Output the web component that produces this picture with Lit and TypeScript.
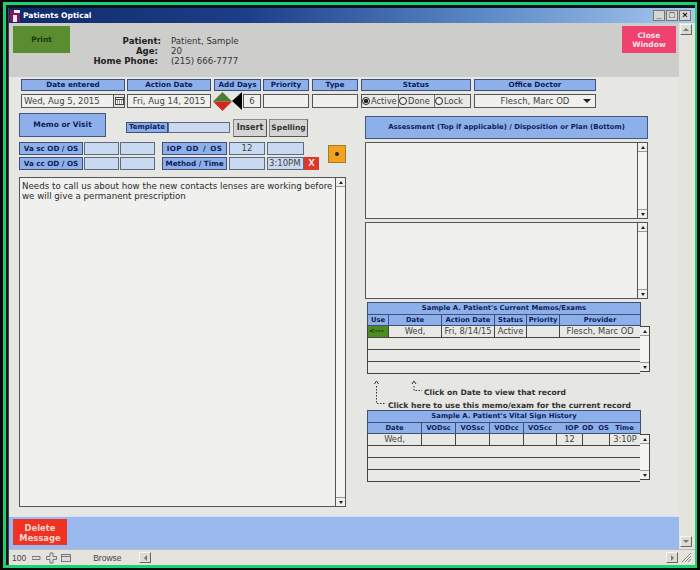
import { LitElement, html, css } from "lit";
import { customElement } from "lit/decorators.js";

const scrollbar = () => html`<div class="sb"><span class="sbb"><i class="up"></i></span><span class="sbt"></span><span class="sbb"><i class="dn"></i></span></div>`;
const radio = (label: string, on = false) => html`<span class="rd"><i class="rc ${on ? "on" : ""}"></i>${label}</span>`;

@customElement("app-root")
export class AppRoot extends LitElement {
  static styles = css`
    :host { display: block; width: 700px; height: 570px; background: #05080c; font-family: "DejaVu Sans", Verdana, sans-serif; overflow: hidden; }
    * { box-sizing: border-box; }
    .outer { width: 700px; height: 570px; padding: 2px 3px 2px 3px; }
    .green { width: 100%; height: 100%; border: solid #1fd071; border-width: 3px 2px 3px 3px; padding: 3px 0 0 2px; background: #0c1424; }
    .win { height: 100%; display: flex; flex-direction: column; background: #e6e6e3; border-left: 1px solid #444; }
    .title { height: 15px; flex: none; display: flex; align-items: center; padding-left: 1px; color: #fff; font: bold 7.6px "DejaVu Sans", sans-serif; background: linear-gradient(90deg, #0f2a6a 0%, #1d3f88 35%, #5d8bc8 70%, #a8c8ee 100%); }
    .title svg { margin-right: 3px; }
    .wbtns { margin-left: auto; display: flex; padding-right: 4px; }
    .wb { width: 12px; height: 11px; background: #d6d6d2; border: 1px solid #77776f; display: flex; align-items: center; justify-content: center; margin-left: 1px; color: #111; font: bold 9px "Liberation Sans", sans-serif; line-height: 9px; }
    .main { flex: 1; display: flex; min-height: 0; }
    .content { width: 670px; display: flex; flex-direction: column; }
    .vs { flex: 1; background: #e4e3de; display: flex; flex-direction: column; justify-content: space-between; align-items: center; padding: 1px 3px 2px 0; }
    .pb { width: 12px; height: 11px; background: #dcdcd6; border: 1px solid; border-color: #f4f4f0 #66665f #66665f #f4f4f0; display: flex; align-items: center; justify-content: center; flex: none; }
    .pb i { display: block; width: 0; height: 0; border: 3px solid transparent; }
    .pb i.up { border-bottom-color: #777; border-top-width: 0; }
    .pb i.dn { border-top-color: #777; border-bottom-width: 0; }
    .pb i.lf { border-right-color: #777; border-left-width: 0; }
    .pb i.rt { border-left-color: #777; border-right-width: 0; }
    .head { height: 54px; flex: none; background: #cdcdcb; display: flex; padding: 3px 3px 0 4px; }
    .btn { display: flex; align-items: center; justify-content: center; text-align: center; font: bold 7.5px/9.5px "DejaVu Sans", sans-serif; width: 57px; height: 27px; }
    .print { background: #5a8c30; color: #173a10; }
    .close { background: #f0426f; color: #fbe3e8; width: 54px; margin-left: auto; padding-top: 1px; }
    .pat { margin: 10px 0 0 0; align-self: flex-start; display: grid; grid-template-columns: 91px 82px; column-gap: 10px; font-size: 8.6px; line-height: 10px; color: #333; white-space: nowrap; }
    .pat b { text-align: right; color: #222; font-size: 8.6px; }
    .pat b.in { padding-right: 3px; }
    .lab { background: #8db0ea; border: 1px solid #3e4f78; color: #101d58; font: bold 7.2px/1 "DejaVu Sans", sans-serif; display: flex; align-items: center; justify-content: center; white-space: nowrap; }
    .fld { background: #f0f0ee; border: 1px solid #555; color: #444; font: 8.5px/1 "DejaVu Sans", sans-serif; display: flex; align-items: center; justify-content: center; white-space: nowrap; overflow: hidden; }
    .lb { background: #c9d9f2; border-color: #5f6a7c; }
    .r1 { display: flex; margin: 2px 0 0 12px; height: 12px; }
    .r2 { display: flex; margin: 3px 0 0 12px; height: 14px; align-items: center; }
    .w105 { width: 104px; margin-right: 2px; } .w84 { width: 84px; margin-right: 3px; } .w47 { width: 47px; margin-right: 2px; }
    .w46 { width: 46px; margin-right: 3px; } .w110 { width: 110px; margin-right: 3px; } .w122 { width: 122px; }
    .date { width: 104px; margin-right: 2px; height: 14px; display: flex; }
    .date .fld { flex: 1; border-right: 0; justify-content: flex-start; padding-left: 2px; }
    .cal { width: 12px; border: 1px solid #555; background: #e4e4e2; display: flex; align-items: center; justify-content: center; }
    .f14 { height: 14px; }
    .dia { width: 19px; height: 19px; margin: 0 0 0 -1px; flex: none; }
    .tri { width: 11px; height: 18px; flex: none; }
    .add { width: 18px; margin-right: 2px; }
    .status { width: 110px; margin-right: 3px; height: 14px; display: flex; border: 1px solid #555; background: #e9e9e6; font: 8.3px/1 "DejaVu Sans", sans-serif; color: #444; }
    .rd { display: flex; align-items: center; white-space: nowrap; border-right: 1px solid #777; overflow: hidden; }
    .rd:nth-child(1) { width: 37px; } .rd:nth-child(2) { width: 36px; } .rd:nth-child(3) { flex: 1; border: 0; }
    .rc { width: 8px; height: 8px; border-radius: 50%; border: 1px solid #222; margin: 0 1px 0 0; flex: none; background: #f4f4f2; }
    .rc.on { background: radial-gradient(circle, #222 45%, #eee 60%); }
    .doc { width: 122px; height: 14px; position: relative; }
    .doc::after { content: ""; position: absolute; right: 4px; top: 4px; border: 4px solid transparent; border-top: 4px solid #222; border-bottom: 0; }
    .body { flex: 1; display: flex; padding: 5px 0 0 10px; min-height: 0; }
    .left { width: 327px; display: flex; flex-direction: column; margin-right: 19px; }
    .right { width: 286px; display: flex; flex-direction: column; padding-top: 3px; }
    .lr1 { display: flex; height: 24px; align-items: flex-start; }
    .memo { width: 87px; height: 24px; font-size: 7.5px; border-color: #45577e; }
    .tpl { width: 42px; height: 11px; margin: 9px 0 0 20px; font-size: 7px; }
    .tf { width: 62px; height: 11px; margin: 9px 3px 0 0; }
    .gb { height: 18px; margin: 6px 2px 0 0; background: #d4d4d2; border: 1px solid; border-color: #888 #555 #555 #888; color: #333; font: bold 7.5px/1 "DejaVu Sans", sans-serif; display: flex; align-items: center; justify-content: center; }
    .ins { width: 34px; font-size: 8px; } .spl { width: 39px; }
    .va { display: flex; margin-top: 5px; }
    .vg1, .vg2 { display: grid; grid-auto-rows: 13px; row-gap: 2px; }
    .vg1 { grid-template-columns: 64px 35px 35px; column-gap: 1px; }
    .vg2 { grid-template-columns: 65px 36px 37px 13px; column-gap: 2px; margin-left: 7px; }
    .iop { letter-spacing: .3px; word-spacing: 1.5px; }
    .vg2 .x { margin-left: -2px; background: #d83a2c; color: #f6ddd8; font: bold 8.5px/13px "DejaVu Sans", sans-serif; text-align: center; }
    .vg2 .tm { justify-content: flex-start; padding-left: 1px; color: #444; }
    .orange { width: 18px; height: 18px; margin: 3px 0 0 9px; background: #f3a21d; border: 1px solid #a57a2a; display: flex; align-items: center; justify-content: center; }
    .orange i { width: 4px; height: 4px; border-radius: 50%; background: #222; display: block; }
    .tbox { display: flex; background: #f0f0ee; border: 1px solid #555; }
    .txt { flex: 1; font: 8.7px/10px "DejaVu Sans", sans-serif; color: #2a2a2a; padding: 3px 2px; white-space: nowrap; }
    .memoarea { height: 330px; margin-top: 7px; }
    .sb { width: 10px; display: flex; flex-direction: column; border-left: 1px solid #555; background: #f4f4f2; flex: none; }
    .sbb { height: 9px; background: #efefed; display: flex; align-items: center; justify-content: center; flex: none; border-bottom: 1px solid #999; }
    .sbb:last-child { border-bottom: 0; border-top: 1px solid #999; }
    .sbb i { display: block; width: 0; height: 0; }
    .sbb i.up { border-left: 2.5px solid transparent; border-right: 2.5px solid transparent; border-bottom: 3px solid #222; }
    .sbb i.dn { border-left: 2.5px solid transparent; border-right: 2.5px solid transparent; border-top: 3px solid #222; }
    .sbt { flex: 1; }
    .assess { width: 283px; height: 23px; font-size: 6.9px; border-color: #45577e; }
    .ab1, .ab2 { width: 283px; height: 77px; margin-top: 3px; }
    .tw { margin: 3px 0 0 2px; display: flex; flex-direction: column; width: 283px; }
    .tw.t2 { margin-top: 0; }
    .tt { width: 274px; height: 12px; background: #8db0ea; border: 1px solid #3e4f78; border-bottom: 0; color: #101d58; font: bold 6.85px/11px "DejaVu Sans", sans-serif; text-align: center; white-space: nowrap; }
    .hd { display: grid; height: 12px; width: 274px; background: #8db0ea; border: 1px solid #3e4f78; color: #101d58; font: bold 6.8px/10px "DejaVu Sans", sans-serif; text-align: center; white-space: nowrap; }
    .hd > span { border-left: 1px solid #3e4f78; overflow: hidden; }
    .hd > span:first-child, .hd > span.nb { border-left: 0; }
    .hd > span.iopc { padding-left: 6px; }
    .g1 { grid-template-columns: 20px 53px 53px 32px 33px 1fr; }
    .g2 { grid-template-columns: 53px 34px 34px 34px 33px 26px 27px 1fr; }
    .tb { display: flex; }
    .rows { width: 274px; display: flex; flex-direction: column; border-left: 1px solid #444; }
    .tr { display: grid; height: 12px; border-bottom: 1px solid #444; background: #e8e8e5; color: #444; font: 8.3px/11px "DejaVu Sans", sans-serif; text-align: center; white-space: nowrap; overflow: hidden; }
    .tr > span { border-left: 1px solid #444; overflow: hidden; }
    .tr > span:first-child { border-left: 0; }
    .tr.nc { display: block; }
    .use { background: #4f8b22; color: #13330c; font-weight: bold; text-align: left; padding-left: 1px; font-size: 7px; }
    .tsb { height: 46px; border: 1px solid #444; border-left: 0; width: 10px; background: #f4f4f2; display: flex; flex-direction: column; }
    .hints { height: 36px; flex: none; margin-left: 2px; position: relative; font: bold 7.65px/1 "DejaVu Sans", sans-serif; color: #333; display: flex; flex-direction: column; padding: 15px 0 0 0; }
    .h1 { margin-left: 57px; white-space: nowrap; height: 13px; }
    .h2 { margin-left: 21px; white-space: nowrap; }
    .hsvg { position: absolute; left: 0; top: 0; }
    .foot { height: 33px; flex: none; background: #9ab9ee; border-top: 1px solid #d5e1f6; padding: 2px 0 0 4px; }
    .del { width: 54px; height: 26px; background: #ee3322; color: #f7d6cf; font-size: 8.4px; line-height: 10px; padding-top: 1px; }
    .st { height: 16px; flex: none; display: flex; align-items: center; background: #e4e3de; border-top: 1px solid #bbb; font: 8.5px "Liberation Sans", sans-serif; color: #444; padding-left: 3px; }
    .st svg { flex: none; }
    .zoom { margin-left: 6px; }
    .brow { margin-left: 17px; width: 46px; }
    .grip { margin: 0 3px 0 1px; }
    .strt { margin-left: auto; margin-right: 2px; }
  `;

  render() {
    return html`
      <div class="outer"><div class="green"><div class="win">
        <div class="title">
          <svg width="10" height="12" viewBox="0 0 10 12"><rect width="10" height="12" fill="#f3e6f3"/><path d="M0 3h4V0H0zM0 12h3V5h4v7h3V3H0z" fill="#7a1c5c"/></svg>
          Patients Optical
          <div class="wbtns"><span class="wb">_</span><span class="wb">□</span><span class="wb">×</span></div>
        </div>
        <div class="main">
          <div class="content">
            <div class="head">
              <div class="btn print">Print</div>
              <div class="pat">
                <b>Patient:</b><span>Patient, Sample</span>
                <b class="in">Age:</b><span>20</span>
                <b class="in">Home Phone:</b><span>(215) 666-7777</span>
              </div>
              <div class="btn close">Close<br />Window</div>
            </div>
            <div class="r1">
              <div class="lab w105">Date entered</div>
              <div class="lab w84">Action Date</div>
              <div class="lab w47">Add Days</div>
              <div class="lab w46">Priority</div>
              <div class="lab w46">Type</div>
              <div class="lab w110">Status</div>
              <div class="lab w122">Office Doctor</div>
            </div>
            <div class="r2">
              <div class="date"><div class="fld">Wed, Aug 5, 2015</div><div class="cal"><svg width="9" height="8" viewBox="0 0 9 8"><rect x=".5" y=".5" width="8" height="7" fill="#fff" stroke="#444"/><path d="M0 2.500h9M2 4h1M4 4h1M6 4h1M2 6h1M4 6h1M6 6h1" stroke="#444"/></svg></div></div>
              <div class="fld w84 f14">Fri, Aug 14, 2015</div>
              <svg class="dia" viewBox="0 0 19 19"><path d="M9.500 0 19 9.500H0z" fill="#4a7d35"/><path d="M0 9.500h19L9.500 19z" fill="#d3271d"/></svg>
              <svg class="tri" viewBox="0 0 11 18"><path d="M10 0v18L0 9z" fill="#000"/></svg>
              <div class="fld add f14">6</div>
              <div class="fld w46 f14"></div>
              <div class="fld w46 f14"></div>
              <div class="status">${radio("Active", true)}${radio("Done")}${radio("Lock")}</div>
              <div class="fld doc">Flesch, Marc OD</div>
            </div>
            <div class="body">
              <div class="left">
                <div class="lr1">
                  <div class="lab memo">Memo or Visit</div>
                  <div class="lab tpl">Template</div>
                  <div class="fld lb tf"></div>
                  <div class="gb ins">Insert</div>
                  <div class="gb spl">Spelling</div>
                </div>
                <div class="va">
                  <div class="vg1">
                    <div class="lab">Va sc OD / OS</div><div class="fld lb"></div><div class="fld lb"></div>
                    <div class="lab">Va cc OD / OS</div><div class="fld lb"></div><div class="fld lb"></div>
                  </div>
                  <div class="vg2">
                    <div class="lab iop">IOP OD / OS</div><div class="fld lb">12</div><div class="fld lb"></div><span></span>
                    <div class="lab">Method / Time</div><div class="fld lb"></div><div class="fld lb tm">3:10PM</div><div class="x">X</div>
                  </div>
                  <div class="orange"><i></i></div>
                </div>
                <div class="tbox memoarea">
                  <div class="txt">Needs to call us about how the new contacts lenses are working before<br />we will give a permanent prescription</div>
                  ${scrollbar()}
                </div>
              </div>
              <div class="right">
                <div class="lab assess">Assessment (Top if applicable) / Disposition or Plan (Bottom)</div>
                <div class="tbox ab1"><div class="txt"></div>${scrollbar()}</div>
                <div class="tbox ab2"><div class="txt"></div>${scrollbar()}</div>
                <div class="tw">
                  <div class="tt">Sample A. Patient's Current Memos/Exams</div>
                  <div class="hd g1"><span>Use</span><span>Date</span><span>Action Date</span><span>Status</span><span>Priority</span><span>Provider</span></div>
                  <div class="tb">
                    <div class="rows">
                      <div class="tr g1"><span class="use">&lt;---</span><span>Wed,</span><span>Fri, 8/14/15</span><span>Active</span><span></span><span>Flesch, Marc OD</span></div>
                      <div class="tr nc"></div><div class="tr nc"></div><div class="tr nc"></div>
                    </div>
                    <div class="tsb"><span class="sbb"><i class="up"></i></span><span class="sbt"></span><span class="sbb"><i class="dn"></i></span></div>
                  </div>
                </div>
                <div class="hints">
                  <svg class="hsvg" width="60" height="36" viewBox="0 0 60 36"><path d="M7.500 10 9.500 7 11.500 10M45 10 47 7 49 10" fill="none" stroke="#333"/><path d="M9.500 12V29.500H19M47 12V16.500H55" fill="none" stroke="#333" stroke-dasharray="1.500 1.500"/></svg>
                  <div class="h1">Click on Date to view that record</div>
                  <div class="h2">Click here to use this memo/exam for the current record</div>
                </div>
                <div class="tw t2">
                  <div class="tt">Sample A. Patient's Vital Sign History</div>
                  <div class="hd g2"><span>Date</span><span>VODsc</span><span>VOSsc</span><span>VODcc</span><span>VOScc</span><span class="nb iopc">IOP</span><span class="nb">OD&nbsp;&nbsp;OS</span><span class="nb">Time</span></div>
                  <div class="tb">
                    <div class="rows">
                      <div class="tr g2"><span>Wed,</span><span></span><span></span><span></span><span></span><span>12</span><span></span><span>3:10P</span></div>
                      <div class="tr nc"></div><div class="tr nc"></div><div class="tr nc"></div>
                    </div>
                    <div class="tsb"><span class="sbb"><i class="up"></i></span><span class="sbt"></span><span class="sbb"><i class="dn"></i></span></div>
                  </div>
                </div>
              </div>
            </div>
            <div class="foot"><div class="btn del">Delete<br />Message</div></div>
          </div>
          <div class="vs">
            <span class="pb"><i class="up"></i></span>
            <span class="pb"><i class="dn"></i></span>
          </div>
        </div>
        <div class="st">
          <span>100</span>
          <svg class="zoom" width="44" height="12" viewBox="0 0 44 12"><path d="M0 4.500h8v3H0z" fill="#ddd" stroke="#777"/><path d="M18 1h3v3.500h3.500v3H21V11h-3V7.500h-3.500v-3H18z" fill="#ddd" stroke="#777"/><rect x="29.500" y="2.500" width="9" height="7" fill="#ddd" stroke="#777"/><path d="M29.500 4.500h9" stroke="#777"/></svg>
          <span class="brow">Browse</span>
          <span class="pb"><i class="lf"></i></span>
          <span class="pb strt"><i class="rt"></i></span>
          <svg class="grip" width="11" height="11" viewBox="0 0 11 11"><path d="M1 10 10 1M4 10l6-6M7 10l3-3" stroke="#888"/></svg>
        </div>
      </div></div></div>
    `;
  }
}
